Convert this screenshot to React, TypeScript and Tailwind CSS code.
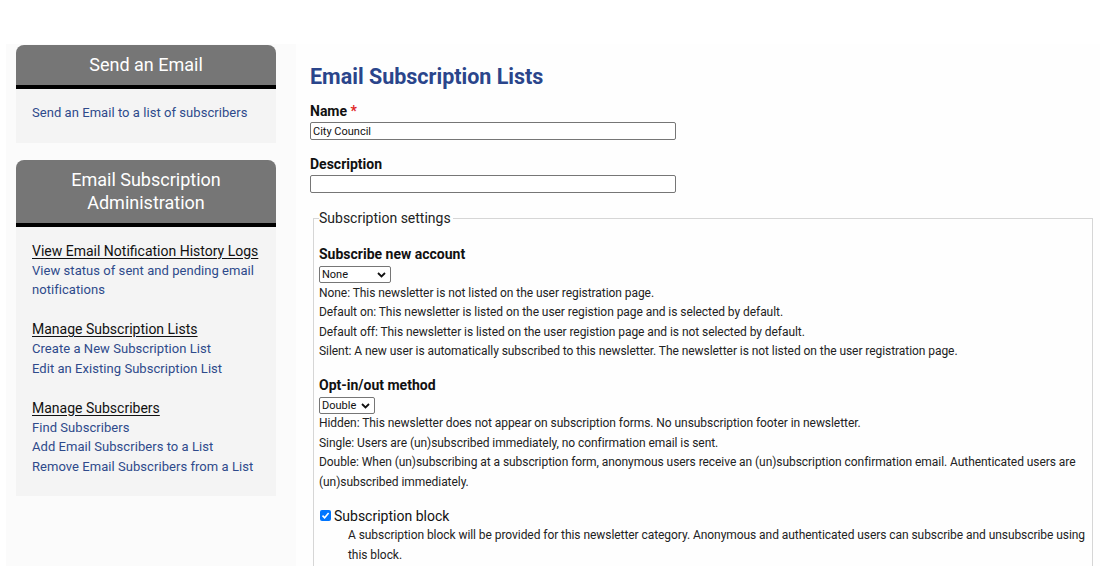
import React from "react";

const Chevron = () => (
  <svg width="9" height="6" viewBox="0 0 9 6" className="shrink-0">
    <path d="M1 1 L4.5 4.5 L8 1" fill="none" stroke="#111" strokeWidth="1.8" />
  </svg>
);

function FakeSelect({ value, width }: { value: string; width: string }) {
  return (
    <div
      className={`flex items-center justify-between h-[17px] ${width} border border-[#767676] rounded-[2px] bg-white pl-[2px] pr-[4px] text-[11px] text-[#111]`}
    >
      <span className="leading-[15px]">{value}</span>
      <Chevron />
    </div>
  );
}

function SideBox({
  title,
  children,
  className = "",
}: {
  title: React.ReactNode;
  children: React.ReactNode;
  className?: string;
}) {
  return (
    <div className={className}>
      <div className="bg-[#767676] rounded-t-[8px] border-b-4 border-black pt-[8px] pb-[9px] px-4 text-center text-white text-[18px] leading-[23px]">
        {title}
      </div>
      <div className="bg-[#f4f4f4] pl-4 pr-3 pt-[14px] pb-[20px]">{children}</div>
    </div>
  );
}

const linkCls = "block text-[13px] leading-[19.5px] text-[#2e4a8b] tracking-[0.05px]";
const titleCls = "block text-[14px] leading-[20px] text-[#111] underline underline-offset-2";
const descCls = "text-[12px] leading-[19.5px] tracking-[-0.06px]";

export default function App() {
  return (
    <div
      className="w-[1100px] h-[566px] overflow-hidden bg-white"
      style={{ fontFamily: "Roboto, 'Noto Sans', sans-serif" }}
    >
      <div className="mt-[44px] ml-[6px] flex h-[522px]">
        {/* Sidebar */}
        <aside className="w-[290px] shrink-0 bg-[#fbfbfb] pl-[10px] pr-[20px] pt-[1px]">
          <SideBox title="Send an Email">
            <a className={linkCls}>Send an Email to a list of subscribers</a>
          </SideBox>
          <SideBox title={<>Email Subscription<br />Administration</>} className="mt-[17px]">
            <div className="mb-[19.5px]">
              <a className={titleCls}>View Email Notification History Logs</a>
              <a className={linkCls}>View status of sent and pending email notifications</a>
            </div>
            <div className="mb-[19.5px]">
              <a className={titleCls}>Manage Subscription Lists</a>
              <a className={linkCls}>Create a New Subscription List</a>
              <a className={linkCls}>Edit an Existing Subscription List</a>
            </div>
            <div>
              <a className={titleCls}>Manage Subscribers</a>
              <a className={linkCls}>Find Subscribers</a>
              <a className={linkCls}>Add Email Subscribers to a List</a>
              <a className={linkCls}>Remove Email Subscribers from a List</a>
            </div>
          </SideBox>
        </aside>

        {/* Main */}
        <main className="flex-1 bg-[#fefefe] pl-[14px] pr-[4px] pt-[21px] text-[#222]">
          <h1 className="text-[21.5px] leading-[24px] font-bold text-[#2a458b]">Email Subscription Lists</h1>

          <div className="mt-[12px]">
            <label className="block text-[14px] leading-[20px] font-bold text-[#111]">
              Name <span className="text-[#e02424]">*</span>
            </label>
            <div className="mt-[1px] h-[18px] w-[366px] border border-[#767676] rounded-[2px] bg-white px-[2px] text-[11px] leading-[17px] text-[#111]">
              City Council
            </div>
          </div>

          <div className="mt-[14px]">
            <label className="block text-[14px] leading-[20px] font-bold text-[#111]">Description</label>
            <div className="mt-[1px] h-[18px] w-[366px] border border-[#767676] rounded-[2px] bg-white" />
          </div>

          <fieldset className="mt-[15px] ml-[3px] mr-[3px] border border-[#d6d6d6] px-[5px] pb-4 min-h-[400px]">
            <legend className="text-[14px] leading-[20px] text-[#222] pr-[2px]">Subscription settings</legend>

            <div className="pt-[16px]">
              <div className="text-[14px] leading-[20px] font-bold text-[#111]">Subscribe new account</div>
              <div className="mt-[2px]">
                <FakeSelect value="None" width="w-[72px]" />
              </div>
              <div className={`${descCls} mt-[0.5px]`}>
                <p>None: This newsletter is not listed on the user registration page.</p>
                <p>Default on: This newsletter is listed on the user registion page and is selected by default.</p>
                <p>Default off: This newsletter is listed on the user registion page and is not selected by default.</p>
                <p>Silent: A new user is automatically subscribed to this newsletter. The newsletter is not listed on the user registration page.</p>
              </div>
            </div>

            <div className="mt-[13.5px]">
              <div className="text-[14px] leading-[20px] font-bold text-[#111]">Opt-in/out method</div>
              <div className="mt-[2px]">
                <FakeSelect value="Double" width="w-[56px]" />
              </div>
              <div className={descCls}>
                <p>Hidden: This newsletter does not appear on subscription forms. No unsubscription footer in newsletter.</p>
                <p>Single: Users are (un)subscribed immediately, no confirmation email is sent.</p>
                <p>Double: When (un)subscribing at a subscription form, anonymous users receive an (un)subscription confirmation email. Authenticated users are (un)subscribed immediately.</p>
              </div>
            </div>

            <div className="mt-[13.5px]">
              <div className="flex items-center h-[20px]">
                <span className="ml-[1px] w-[11px] h-[11px] rounded-[2px] bg-[#0075ff] flex items-center justify-center">
                  <svg width="9" height="9" viewBox="0 0 9 9">
                    <path d="M1.5 4.6 L3.6 6.7 L7.6 2" fill="none" stroke="white" strokeWidth="1.6" />
                  </svg>
                </span>
                <span className="ml-[3px] text-[14px] leading-[20px] text-[#111]">Subscription block</span>
              </div>
              <p className={`${descCls} ml-[29px] mt-[0.5px]`}>
                A subscription block will be provided for this newsletter category. Anonymous and authenticated users can subscribe and unsubscribe using this block.
              </p>
            </div>
          </fieldset>
        </main>
      </div>
    </div>
  );
}
